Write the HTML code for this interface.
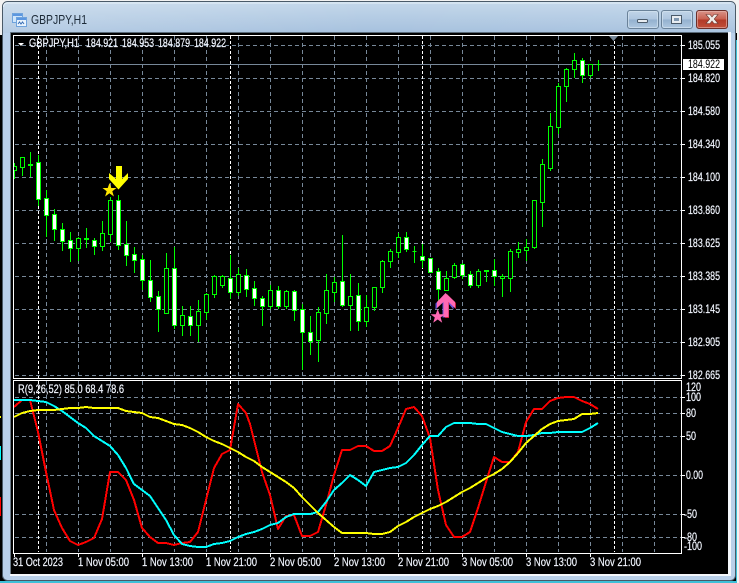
<!DOCTYPE html>
<html>
<head>
<meta charset="utf-8">
<title>GBPJPY,H1</title>
<style>
html,body{margin:0;padding:0;background:#000;width:739px;height:583px;overflow:hidden}
svg{display:block;position:absolute;left:0;top:0}
text{font-family:"Liberation Sans",sans-serif;font-size:12px}
.l text{stroke:#f2f6ff;stroke-width:.2px}
</style>
</head>
<body>
<svg width="739" height="583" viewBox="0 0 739 583" xmlns="http://www.w3.org/2000/svg">
<defs>
<linearGradient id="tb" x1="0" y1="0" x2="0" y2="1"><stop offset="0" stop-color="#c3d7ea"/><stop offset="1" stop-color="#a6c1de"/></linearGradient>
<linearGradient id="tb2" x1="0" y1="0" x2="1" y2="0"><stop offset="0" stop-color="#ffffff" stop-opacity=".18"/><stop offset=".5" stop-color="#ffffff" stop-opacity="0"/><stop offset="1" stop-color="#ffffff" stop-opacity=".05"/></linearGradient>
<linearGradient id="btn" x1="0" y1="0" x2="0" y2="1"><stop offset="0" stop-color="#c2d5e8"/><stop offset=".48" stop-color="#aec6df"/><stop offset=".52" stop-color="#94b1cf"/><stop offset="1" stop-color="#b0c9e1"/></linearGradient>
<linearGradient id="cls" x1="0" y1="0" x2="0" y2="1"><stop offset="0" stop-color="#d9968c"/><stop offset=".48" stop-color="#c9604f"/><stop offset=".52" stop-color="#b23a28"/><stop offset="1" stop-color="#c2503a"/></linearGradient>
</defs>

<!-- outside -->
<rect width="739" height="583" fill="#000"/>
<rect x="0" y="0" width="739" height="33" fill="#f2f2f2"/>
<rect x="0" y="33" width="2" height="2" fill="#f2f2f2"/>
<rect x="0" y="416" width="1" height="2" fill="#ffff00"/>
<rect x="0" y="446" width="1" height="14" fill="#00ffff"/>
<rect x="0" y="497" width="1" height="19" fill="#ff0000"/>
<rect x="0" y="581" width="739" height="2" fill="#3fc0d8"/>
<rect x="737" y="0" width="2" height="583" fill="#f2f2f2"/>
<rect x="736" y="40" width="1" height="543" fill="#3fc0d8"/>

<!-- window frame -->
<rect x="2.500" y="1.500" width="733" height="579" rx="5" fill="#b9d0ea" stroke="#4a5a68"/>
<path d="M3 33V7q0-5 5-5H730q5 0 5 5V33z" fill="url(#tb)"/>
<path d="M3 33V7q0-5 5-5H730q5 0 5 5V33z" fill="url(#tb2)"/>
<path d="M3.500 7q0-4 4-4H731" fill="none" stroke="#e6f0f8" stroke-width="1"/>
<rect x="10" y="32" width="721" height="544" fill="#f4f7fb"/>
<rect x="10" y="32" width="718" height="542" fill="#000"/>
<rect x="10" y="32" width="718" height="1" fill="#5a6a78"/>
<rect x="10" y="32" width="1" height="542" fill="#6a7a88"/>

<!-- title icon -->
<g shape-rendering="crispEdges">
<rect x="12.500" y="13.500" width="10" height="9" fill="#cfe6fb" stroke="#6fa3dc"/>
<rect x="13" y="14" width="9" height="2" fill="#5c97e0"/>
<rect x="16.500" y="17.500" width="10" height="9" fill="#e8f3fd" stroke="#6fa3dc"/>
<rect x="17" y="18" width="9" height="2" fill="#5c97e0"/>
</g>
<path d="M18 24l1.500-2 1.500 2 1.500-2 1.500 2" fill="none" stroke="#3a6fb5" stroke-width="1"/>
<text x="31" y="24" textLength="56" lengthAdjust="spacingAndGlyphs" style="font-size:13px" fill="#1c2a38">GBPJPY,H1</text>

<!-- window buttons -->
<rect x="627.500" y="10.500" width="31" height="18" rx="2.500" fill="url(#btn)" stroke="#6a8299"/>
<rect x="628.500" y="11.500" width="29" height="16" rx="2" fill="none" stroke="#d3e2f0" stroke-opacity=".7"/>
<rect x="637.500" y="19.500" width="10" height="3" rx="1" fill="#e8edf2" stroke="#4a5a6a"/>
<rect x="661.500" y="10.500" width="31" height="18" rx="2.500" fill="url(#btn)" stroke="#6a8299"/>
<rect x="662.500" y="11.500" width="29" height="16" rx="2" fill="none" stroke="#d3e2f0" stroke-opacity=".7"/>
<rect x="671.500" y="15.500" width="10" height="8" fill="#e8edf2" stroke="#4a5a6a"/>
<rect x="674" y="18" width="5" height="3" fill="#7f97b0"/>
<rect x="696.500" y="10.500" width="31" height="18" rx="2.500" fill="url(#cls)" stroke="#6b2f2a"/>
<rect x="697.500" y="11.500" width="29" height="16" rx="2" fill="none" stroke="#e8b8b0" stroke-opacity=".6"/>
<path d="M706 14.500h4l2 2.500 2-2.500h4l-3.800 4.500 3.800 4.500h-4l-2-2.500-2 2.500h-4l3.800-4.500z" fill="#f0ece8" stroke="#6b3a34" stroke-width=".6"/>

<!-- grid upper -->
<g shape-rendering="crispEdges" fill="none">
<path stroke="#778899" stroke-dasharray="4 3" d="M15 45.500H681M15 78.500H681M15 111.500H681M15 144.500H681M15 177.500H681M15 210.500H681M15 243.500H681M15 276.500H681M15 309.500H681M15 342.500H681M15 375.500H681"/>
<path stroke="#778899" stroke-dasharray="4 3" d="M46.500 36V378M78.500 36V378M110.500 36V378M142.500 36V378M174.500 36V378M206.500 36V378M238.500 36V378M270.500 36V378M302.500 36V378M334.500 36V378M366.500 36V378M398.500 36V378M430.500 36V378M462.500 36V378M494.500 36V378M526.500 36V378M558.500 36V378M590.500 36V378M622.500 36V378M654.500 36V378"/>
<path stroke="#ffffff" stroke-dasharray="3 2" d="M38.500 36V378M230.500 36V378M422.500 36V378M614.500 36V378"/>
<path stroke="#778899" d="M14 64.500H682"/>
<!-- grid lower -->
<path stroke="#778899" stroke-dasharray="4 3" d="M15 397.500H681M15 413.500H681M15 436.500H681M15 475.500H681M15 514.500H681M15 537.500H681"/>
<path stroke="#778899" stroke-dasharray="4 3" d="M46.500 381V552M78.500 381V552M110.500 381V552M142.500 381V552M174.500 381V552M206.500 381V552M238.500 381V552M270.500 381V552M302.500 381V552M334.500 381V552M366.500 381V552M398.500 381V552M430.500 381V552M462.500 381V552M494.500 381V552M526.500 381V552M558.500 381V552M590.500 381V552M622.500 381V552M654.500 381V552"/>
<path stroke="#ffffff" stroke-dasharray="3 2" d="M38.500 381V552M230.500 381V552M422.500 381V552M614.500 381V552"/>
</g>

<!-- candles -->
<g shape-rendering="crispEdges" fill="none" stroke="#00ff00" stroke-width="1">
<path d="M14.500 163V179M22.500 157V176M30.500 152V177M38.500 155V206M46.500 190V237M54.500 209V241M62.500 223V251M70.500 232V262M78.500 237V261M86.500 228V248M94.500 238V255M102.500 221V251M110.500 197V242M118.500 195V250M126.500 221V266M134.500 247V273M142.500 255V290M150.500 260V302M158.500 291V332M166.500 253V313M174.500 247V329M182.500 306V336M190.500 306V336M198.500 300V342M206.500 293V320M214.500 275V298M222.500 275V288M230.500 255V299M238.500 268V296M246.500 269V297M254.500 281V306M262.500 296V326M270.500 285V309M278.500 286V309M286.500 290V309M294.500 290V321M302.500 304V370M310.500 316V355M318.500 307V362M326.500 274V324M334.500 277V302M342.500 235V307M350.500 274V331M358.500 283V331M366.500 295V327M374.500 287V311M382.500 260V293M390.500 249V268M398.500 233V258M406.500 232V252M414.500 246V263M422.500 244V268M430.500 258V272M438.500 268V302M446.500 271V291M454.500 263V279M462.500 263V279M470.500 271V288M478.500 269V288M486.500 270V282M494.500 259V286M502.500 274V297M510.500 249V292M518.500 242V258M526.500 239V261M534.500 200V249M542.500 159V227M550.500 113V171M558.500 83V134M566.500 68V102M574.500 53V78M582.500 58V83M590.500 64V78M598.500 60V71"/>
<path fill="#000" d="M13.500 166.500h3v4h-3zM20.500 157.500h4v10h-4zM76.500 238.500h4v10h-4zM100.500 233.500h4v13h-4zM108.500 200.500h4v34h-4zM164.500 268.500h4v45h-4zM180.500 315.500h4v10h-4zM196.500 311.500h4v14h-4zM204.500 294.500h4v18h-4zM212.500 276.500h4v18h-4zM220.500 276.500h4v9h-4zM236.500 274.500h4v18h-4zM268.500 290.500h4v16h-4zM284.500 291.500h4v15h-4zM316.500 312.500h4v28h-4zM324.500 290.500h4v23h-4zM332.500 282.500h4v10h-4zM348.500 296.500h4v9h-4zM364.500 307.500h4v14h-4zM372.500 287.500h4v20h-4zM380.500 261.500h4v26h-4zM388.500 251.500h4v10h-4zM396.500 237.500h4v15h-4zM444.500 278.500h4v12h-4zM452.500 265.500h4v12h-4zM476.500 271.500h4v14h-4zM500.500 276.500h4v2h-4zM508.500 251.500h4v27h-4zM516.500 249.500h4v3h-4zM524.500 247.500h4v3h-4zM532.500 200.500h4v47h-4zM540.500 164.500h4v38h-4zM548.500 126.500h4v42h-4zM556.500 86.500h4v41h-4zM564.500 69.500h4v17h-4zM572.500 60.500h4v9h-4zM588.500 64.500h4v11h-4z"/>
<path fill="#fff" d="M36.500 162.500h4v37h-4zM44.500 198.500h4v17h-4zM52.500 214.500h4v15h-4zM60.500 229.500h4v12h-4zM68.500 240.500h4v8h-4zM92.500 240.500h4v6h-4zM116.500 200.500h4v45h-4zM124.500 244.500h4v11h-4zM132.500 254.500h4v6h-4zM140.500 259.500h4v21h-4zM148.500 280.500h4v17h-4zM156.500 296.500h4v13h-4zM172.500 268.500h4v57h-4zM188.500 316.500h4v9h-4zM228.500 278.500h4v14h-4zM244.500 275.500h4v14h-4zM252.500 288.500h4v10h-4zM260.500 298.500h4v8h-4zM276.500 290.500h4v16h-4zM292.500 291.500h4v19h-4zM300.500 309.500h4v23h-4zM308.500 332.500h4v9h-4zM340.500 281.500h4v24h-4zM356.500 295.500h4v26h-4zM404.500 237.500h4v12h-4zM420.500 256.500h4v4h-4zM428.500 258.500h4v14h-4zM436.500 271.500h4v18h-4zM460.500 264.500h4v11h-4zM468.500 274.500h4v11h-4zM492.500 270.500h4v6h-4zM580.500 60.500h4v15h-4z"/>
<path d="M28.500 164.500h4v1h-4zM84.500 238.500h4v1h-4zM412.500 251.500h4M484.500 270.500h4v1h-4zM596.500 64.500h4"/>
</g>

<!-- markers -->
<polygon points="116,166 122,166 122,179 128,173 128,179 118.500,189.500 109,179 109,173 116,179" fill="#ffff00"/>
<polygon points="109.500,183 111.300,188 116.500,188 112.300,191.300 113.900,196.500 109.500,193.300 105.100,196.500 106.700,191.300 102.500,188 107.700,188" fill="#ffe600"/>
<polygon points="445,294 436,303 436,309 443,302 443,317 448,317 448,302 454,309 454,303" fill="#6a50d8" transform="translate(-.5,.5)"/>
<polygon points="447,294 456,303 456,309 449,302 449,318 445,318 445,302" fill="#c8203c"/>
<polygon points="445.500,293 437,302 437,308 443.500,302 443.500,317 448.500,317 448.500,302 455,308 455,302" fill="#ff69b4"/>
<polygon points="437.700,309 439.600,314.300 444.800,314.300 440.600,317.500 442.200,322.700 437.700,319.500 433.200,322.700 434.800,317.500 430.600,314.300 435.800,314.300" fill="#ff69b4"/>

<!-- indicator lines -->
<g fill="none" stroke-width="2" shape-rendering="crispEdges" stroke-linejoin="round">
<polyline stroke="#ff0000" points="14,407 22,400 30,400 38,432 46,472 54,510 62,528 70,541 78,545 86,542 94,538 102,519 110,472 118,472 126,480 134,500 142,528 150,537 158,543 166,543 174,545 182,543 190,542 198,532 206,500 214,468 222,454 230,450 238,404 246,413 250,424 254,440 262,472 270,495 278,529 286,516 294,515 302,536 310,536 318,532 326,505 334,475 342,450 350,450 358,446 366,446 374,451 382,451 390,446 398,428 406,409 414,407 422,416 430,438 438,490 446,525 454,537 462,537 470,532 478,508 486,482 494,457 502,462 510,462 518,452 526,422 534,409 542,409 550,401 558,398 566,397 574,397 582,401 590,404 598,409"/>
<polyline stroke="#00ffff" points="14,400 22,400 30,400 38,401 46,402 54,406 62,411 70,417 78,423 86,428 94,436 102,441 110,446 118,455 126,468 134,484 142,490 150,496 158,508 166,520 174,535 182,544 190,546 198,547 206,547 214,544 222,543 230,541 238,537 246,534 254,532 262,529 270,525 278,523 286,517 294,514 302,514 310,514 318,512 326,502 334,490 342,483 350,475 358,480 366,486 374,472 382,470 390,468 398,467 406,463 414,455 422,445 430,436 438,436 446,427 454,423 462,423 470,423 478,424 486,424 494,428 502,432 510,434 518,436 526,436 534,435 542,433 550,433 558,432 566,432 574,432 582,432 590,428 598,423"/>
<polyline stroke="#ffff00" points="14,417 22,413 30,411 38,410 46,410 54,410 62,409 70,408 78,408 86,407 94,408 102,408 110,408 118,408 126,411 134,412 142,413 150,417 158,418 166,421 174,424 182,425 190,428 198,432 206,437 214,441 222,444 230,448 238,452 246,457 254,461 262,467 270,472 278,477 286,482 294,488 302,497 310,505 318,513 326,520 334,527 342,533 350,533 358,533 366,533 374,534 382,534 390,532 398,526 406,522 414,517 422,513 430,509 438,506 446,502 454,497 462,492 470,488 478,483 486,478 494,474 502,469 510,462 518,453 526,443 534,436 542,429 550,424 558,421 566,420 574,419 582,414 590,414 598,413"/>
</g>

<!-- panel borders -->
<g shape-rendering="crispEdges" fill="none" stroke="#ffffff">
<path d="M13.500 35.500H681.500V378.500H13.500z"/>
<path d="M13.500 380.500H681.500V553.500H13.500z"/>
<path d="M14.500 553V557M78.500 553V557M142.500 553V557M206.500 553V557M270.500 553V557M334.500 553V557M398.500 553V557M462.500 553V557M526.500 553V557M590.500 553V557"/>
<path d="M682 45.500h3M682 78.500h3M682 111.500h3M682 144.500h3M682 177.500h3M682 210.500h3M682 243.500h3M682 276.500h3M682 309.500h3M682 342.500h3M682 375.500h3M682 397.500h3M682 413.500h3M682 436.500h3M682 475.500h3M682 514.500h3M682 537.500h3"/>
</g>
<polygon points="609,36 618,36 613.500,41" fill="#778899"/>
<polygon points="18,43 24,43 21,46" fill="#fff"/>

<!-- price tag -->
<rect x="683" y="59" width="41" height="11" fill="#fff"/>

<!-- text -->
<g fill="#f2f6ff" class="l">
<text x="29" y="47" textLength="50" lengthAdjust="spacingAndGlyphs">GBPJPY,H1</text>
<text x="86" y="47" textLength="32" lengthAdjust="spacingAndGlyphs">184.921</text>
<text x="122" y="47" textLength="32" lengthAdjust="spacingAndGlyphs">184.953</text>
<text x="158" y="47" textLength="32" lengthAdjust="spacingAndGlyphs">184.879</text>
<text x="194" y="47" textLength="32" lengthAdjust="spacingAndGlyphs">184.922</text>
<text x="18" y="393" textLength="106" lengthAdjust="spacingAndGlyphs">R(9,26,52) 85.0 68.4 78.6</text>

<text x="688" y="49" textLength="32" lengthAdjust="spacingAndGlyphs">185.055</text>
<text x="688" y="82" textLength="32" lengthAdjust="spacingAndGlyphs">184.820</text>
<text x="688" y="115" textLength="32" lengthAdjust="spacingAndGlyphs">184.580</text>
<text x="688" y="148" textLength="32" lengthAdjust="spacingAndGlyphs">184.340</text>
<text x="688" y="181" textLength="32" lengthAdjust="spacingAndGlyphs">184.100</text>
<text x="688" y="214" textLength="32" lengthAdjust="spacingAndGlyphs">183.860</text>
<text x="688" y="247" textLength="32" lengthAdjust="spacingAndGlyphs">183.625</text>
<text x="688" y="280" textLength="32" lengthAdjust="spacingAndGlyphs">183.385</text>
<text x="688" y="313" textLength="32" lengthAdjust="spacingAndGlyphs">183.145</text>
<text x="688" y="346" textLength="32" lengthAdjust="spacingAndGlyphs">182.905</text>
<text x="688" y="379" textLength="32" lengthAdjust="spacingAndGlyphs">182.665</text>

<text x="686" y="391" textLength="15" lengthAdjust="spacingAndGlyphs">120</text>
<text x="686" y="401" textLength="15" lengthAdjust="spacingAndGlyphs">100</text>
<text x="686" y="417" textLength="10" lengthAdjust="spacingAndGlyphs">80</text>
<text x="686" y="440" textLength="10" lengthAdjust="spacingAndGlyphs">50</text>
<text x="686" y="479" textLength="17" lengthAdjust="spacingAndGlyphs">0.00</text>
<text x="684" y="518" textLength="13" lengthAdjust="spacingAndGlyphs">-50</text>
<text x="684" y="541" textLength="13" lengthAdjust="spacingAndGlyphs">-80</text>
<text x="684" y="550" textLength="18" lengthAdjust="spacingAndGlyphs">-100</text>

<text x="13" y="566" textLength="50" lengthAdjust="spacingAndGlyphs">31 Oct 2023</text>
<text x="78" y="566" textLength="51" lengthAdjust="spacingAndGlyphs">1 Nov 05:00</text>
<text x="142" y="566" textLength="51" lengthAdjust="spacingAndGlyphs">1 Nov 13:00</text>
<text x="206" y="566" textLength="51" lengthAdjust="spacingAndGlyphs">1 Nov 21:00</text>
<text x="270" y="566" textLength="51" lengthAdjust="spacingAndGlyphs">2 Nov 05:00</text>
<text x="334" y="566" textLength="51" lengthAdjust="spacingAndGlyphs">2 Nov 13:00</text>
<text x="398" y="566" textLength="51" lengthAdjust="spacingAndGlyphs">2 Nov 21:00</text>
<text x="462" y="566" textLength="51" lengthAdjust="spacingAndGlyphs">3 Nov 05:00</text>
<text x="526" y="566" textLength="51" lengthAdjust="spacingAndGlyphs">3 Nov 13:00</text>
<text x="590" y="566" textLength="51" lengthAdjust="spacingAndGlyphs">3 Nov 21:00</text>
</g>
<text x="688" y="68" textLength="32" lengthAdjust="spacingAndGlyphs" fill="#000">184.922</text>
</svg>
</body>
</html>
